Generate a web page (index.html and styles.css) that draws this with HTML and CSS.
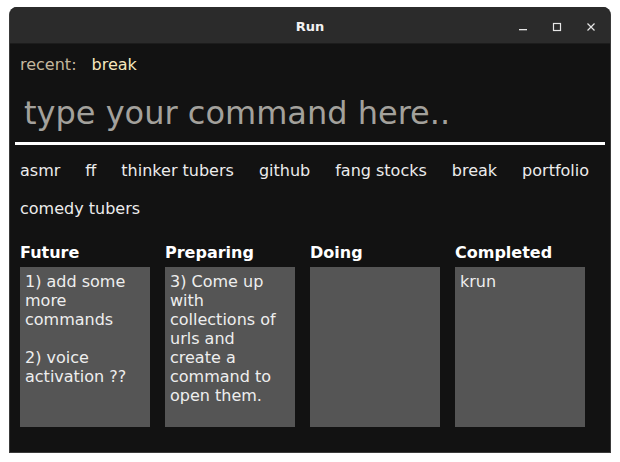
FILE: index.html
```html
<!DOCTYPE html>
<html>
<head>
<meta charset="utf-8">
<title>Run</title>
<link rel="stylesheet" href="styles.css">
</head>
<body>
<div class="window">
  <div class="titlebar">
    <span class="title">Run</span>
    <div class="controls">
      <svg class="ctl" width="10" height="10" viewBox="0 0 10 10"><rect x="1" y="7" width="8" height="1.3" fill="#e6e6e6"/></svg>
      <svg class="ctl" width="10" height="10" viewBox="0 0 10 10"><rect x="1.5" y="1.5" width="7" height="7" fill="none" stroke="#e6e6e6" stroke-width="1.2"/></svg>
      <svg class="ctl" width="10" height="10" viewBox="0 0 10 10"><path d="M1.5 1.5 L8.5 8.5 M8.5 1.5 L1.5 8.5" stroke="#e6e6e6" stroke-width="1.2"/></svg>
    </div>
  </div>
  <div class="content">
    <div class="recent"><span class="recent-label">recent:</span><span class="recent-value">break</span></div>
    <div class="input-wrap"><input class="cmd" type="text" placeholder="type your command here.."></div>
    <div class="commands">
      <span class="command">asmr</span>
      <span class="command">ff</span>
      <span class="command">thinker tubers</span>
      <span class="command">github</span>
      <span class="command">fang stocks</span>
      <span class="command">break</span>
      <span class="command">portfolio</span>
      <span class="command">comedy tubers</span>
    </div>
    <div class="board">
      <div class="col">
        <div class="col-title">Future</div>
        <div class="card">1) add some more commands<br><br>2) voice activation ??</div>
      </div>
      <div class="col">
        <div class="col-title">Preparing</div>
        <div class="card">3) Come up with collections of urls and create a command to open them.</div>
      </div>
      <div class="col">
        <div class="col-title">Doing</div>
        <div class="card"></div>
      </div>
      <div class="col">
        <div class="col-title">Completed</div>
        <div class="card">krun</div>
      </div>
    </div>
  </div>
</div>
</body>
</html>
```
FILE: styles.css
```css
* { box-sizing: border-box; }
html, body { margin: 0; padding: 0; background: #ffffff; }
body { font-family: "DejaVu Sans", sans-serif; }

.window {
  margin: 7px 0 0 9px;
  width: 602px;
  height: 446px;
  border-radius: 8px 8px 0 0;
  overflow: hidden;
  background: #121212;
  border: 1px solid #3a3a3a;
  border-top: none;
  display: flex;
  flex-direction: column;
}

.titlebar {
  height: 37px;
  flex: none;
  background: #2b2b2b;
  border-bottom: 1px solid #1c1c1c;
  display: flex;
  align-items: center;
  justify-content: center;
  position: relative;
}
.title {
  color: #f2f2f2;
  font-weight: bold;
  font-size: 13px;
  margin-top: 3px;
}
.controls {
  position: absolute;
  right: 14px;
  top: 15px;
  display: flex;
  gap: 24px;
}
.ctl { display: block; }

.content {
  flex: 1;
  padding: 11px 0 0 10px;
  display: flex;
  flex-direction: column;
}

.recent {
  font-size: 16px;
  display: flex;
  gap: 15px;
}
.recent-label { color: #c4b89e; }
.recent-value { color: #f6e7bd; }

.input-wrap {
  margin: 21px 5px 0 -5px;
  border-bottom: 3px solid #ffffff;
  padding-bottom: 10px;
}
.cmd {
  display: block;
  width: 100%;
  border: none;
  outline: none;
  background: transparent;
  font-family: "DejaVu Sans", sans-serif;
  font-size: 32px;
  line-height: 37px;
  height: 37px;
  padding: 0 0 0 9px;
  color: #eeeeee;
}
.cmd::placeholder { color: #a3a19c; opacity: 1; }

.commands {
  margin-top: 7px;
  display: flex;
  flex-wrap: wrap;
  column-gap: 25px;
  font-size: 16px;
  line-height: 38px;
  color: #ececec;
}

.board {
  margin-top: 15px;
  display: flex;
  gap: 15px;
}
.col { width: 130px; }
.col-title {
  color: #ffffff;
  font-weight: bold;
  font-size: 16px;
  line-height: 19px;
  margin-bottom: 5px;
}
.card {
  height: 160px;
  background: #555555;
  color: #eeeeee;
  font-size: 16px;
  line-height: 19px;
  padding: 5px 5px;
}
```
